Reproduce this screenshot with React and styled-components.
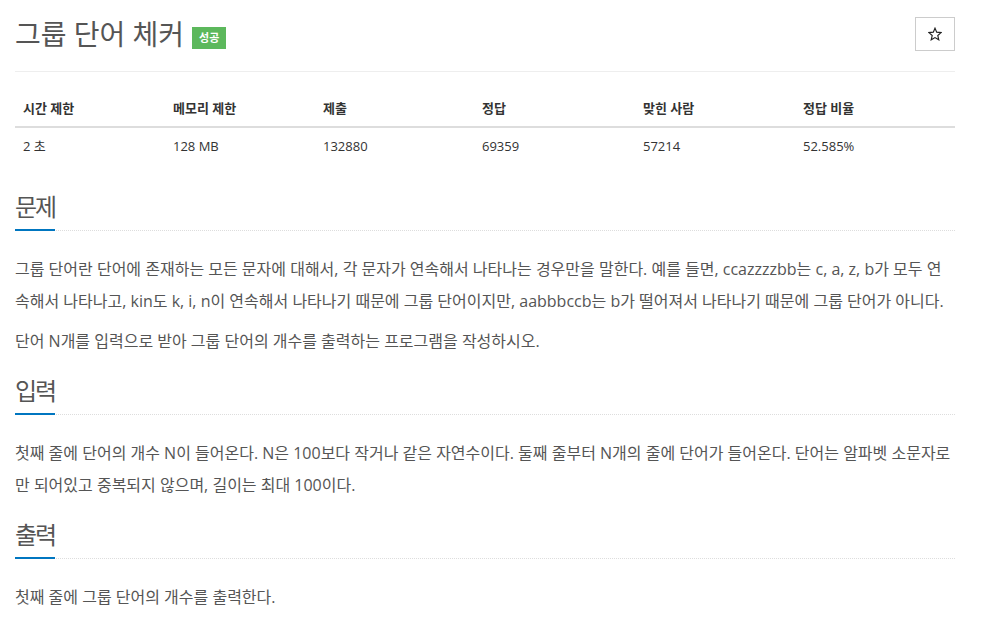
import styled, { createGlobalStyle } from "styled-components";

const GlobalStyle = createGlobalStyle`
  body {
    margin: 0;
    background: #fff;
    font-family: "Open Sans", "Noto Sans CJK KR", sans-serif;
    color: #333;
  }
`;

const stats = [
  { label: "시간 제한", value: "2 초", width: 150 },
  { label: "메모리 제한", value: "128 MB", width: 150 },
  { label: "제출", value: "132880", width: 159 },
  { label: "정답", value: "69359", width: 161 },
  { label: "맞힌 사람", value: "57214", width: 160 },
  { label: "정답 비율", value: "52.585%", width: 160 },
];

const StarIcon = () => (
  <svg width="14" height="14" viewBox="0 0 24 24" fill="none" stroke="#222" strokeWidth="2" strokeLinejoin="miter">
    <polygon points="12,2 14.9,8.9 22.5,9.6 16.8,14.6 18.5,22 12,18.1 5.5,22 7.2,14.6 1.5,9.6 9.1,8.9" />
  </svg>
);

const App = () => {
  return (
    <>
      <GlobalStyle />
      <Page>
        <Header>
          <Title>
            그룹 단어 체커
            <Badge>성공</Badge>
          </Title>
          <StarButton type="button" aria-label="star">
            <StarIcon />
          </StarButton>
        </Header>

        <StatsTable>
          <colgroup>
            {stats.map((s) => (
              <col key={s.label} style={{ width: s.width }} />
            ))}
          </colgroup>
          <thead>
            <tr>
              {stats.map((s) => (
                <Th key={s.label}>{s.label}</Th>
              ))}
            </tr>
          </thead>
          <tbody>
            <tr>
              {stats.map((s) => (
                <Td key={s.label}>{s.value}</Td>
              ))}
            </tr>
          </tbody>
        </StatsTable>

        <Section>
          <Headline>
            <H2>문제</H2>
          </Headline>
          <Text>
            <p>
              그룹 단어란 단어에 존재하는 모든 문자에 대해서, 각 문자가 연속해서 나타나는 경우만을 말한다. 예를 들면,
              ccazzzzbb는 c, a, z, b가 모두 연속해서 나타나고, kin도 k, i, n이 연속해서 나타나기 때문에 그룹 단어이지만,
              aabbbccb는 b가 떨어져서 나타나기 때문에 그룹 단어가 아니다.
            </p>
            <p>단어 N개를 입력으로 받아 그룹 단어의 개수를 출력하는 프로그램을 작성하시오.</p>
          </Text>
        </Section>

        <Section>
          <Headline>
            <H2>입력</H2>
          </Headline>
          <Text>
            <p>
              첫째 줄에 단어의 개수 N이 들어온다. N은 100보다 작거나 같은 자연수이다. 둘째 줄부터 N개의 줄에 단어가
              들어온다. 단어는 알파벳 소문자로만 되어있고 중복되지 않으며, 길이는 최대 100이다.
            </p>
          </Text>
        </Section>

        <Section>
          <Headline>
            <H2>출력</H2>
          </Headline>
          <Text>
            <p>첫째 줄에 그룹 단어의 개수를 출력한다.</p>
          </Text>
        </Section>
      </Page>
    </>
  );
};

const Page = styled.div`
  width: 940px;
  padding: 0 15px;
`;

const Header = styled.div`
  display: flex;
  align-items: flex-start;
  justify-content: space-between;
  padding-top: 17px;
  padding-bottom: 20px;
  border-bottom: 1px solid #eee;
`;

const Title = styled.h1`
  display: flex;
  align-items: center;
  margin: 0;
  font-size: 28px;
  line-height: 34px;
  font-weight: 400;
  color: #555;
  font-feature-settings: "palt";
`;

const Badge = styled.span`
  display: inline-block;
  margin-left: 8px;
  margin-top: 7px;
  padding: 0 7px;
  height: 22px;
  line-height: 22px;
  background: #5cb85c;
  color: #fff;
  font-size: 11px;
  font-weight: 700;
`;

const StarButton = styled.button`
  display: flex;
  align-items: center;
  justify-content: center;
  width: 40px;
  height: 34px;
  padding: 0;
  border: 1px solid #ccc;
  border-radius: 0;
  background: #fff;
`;

const StatsTable = styled.table`
  width: 940px;
  margin-top: 18px;
  margin-bottom: 30px;
  border-collapse: collapse;
  table-layout: fixed;
  font-size: 13px;
`;

const Th = styled.th`
  padding: 8px;
  line-height: 20px;
  text-align: left;
  font-weight: 700;
  color: #333;
  border-bottom: 2px solid #ddd;
`;

const Td = styled.td`
  padding: 8px;
  line-height: 20px;
  color: #333;
`;

const Section = styled.section`
  margin-bottom: 21px;
`;

const Headline = styled.div`
  border-bottom: 1px dotted #ddd;
`;

const H2 = styled.h2`
  display: inline-block;
  margin: 0 0 -1px;
  padding-bottom: 9px;
  font-size: 24px;
  line-height: 26px;
  font-weight: 400;
  letter-spacing: -2px;
  color: #555;
  border-bottom: 2px solid #0076c0;
  font-feature-settings: "palt";
`;

const Text = styled.div`
  padding-top: 22px;
  font-size: 16px;
  line-height: 32px;
  color: #555;
  font-feature-settings: "palt";

  p {
    margin: 0 0 8px;
  }
`;

export default App;
